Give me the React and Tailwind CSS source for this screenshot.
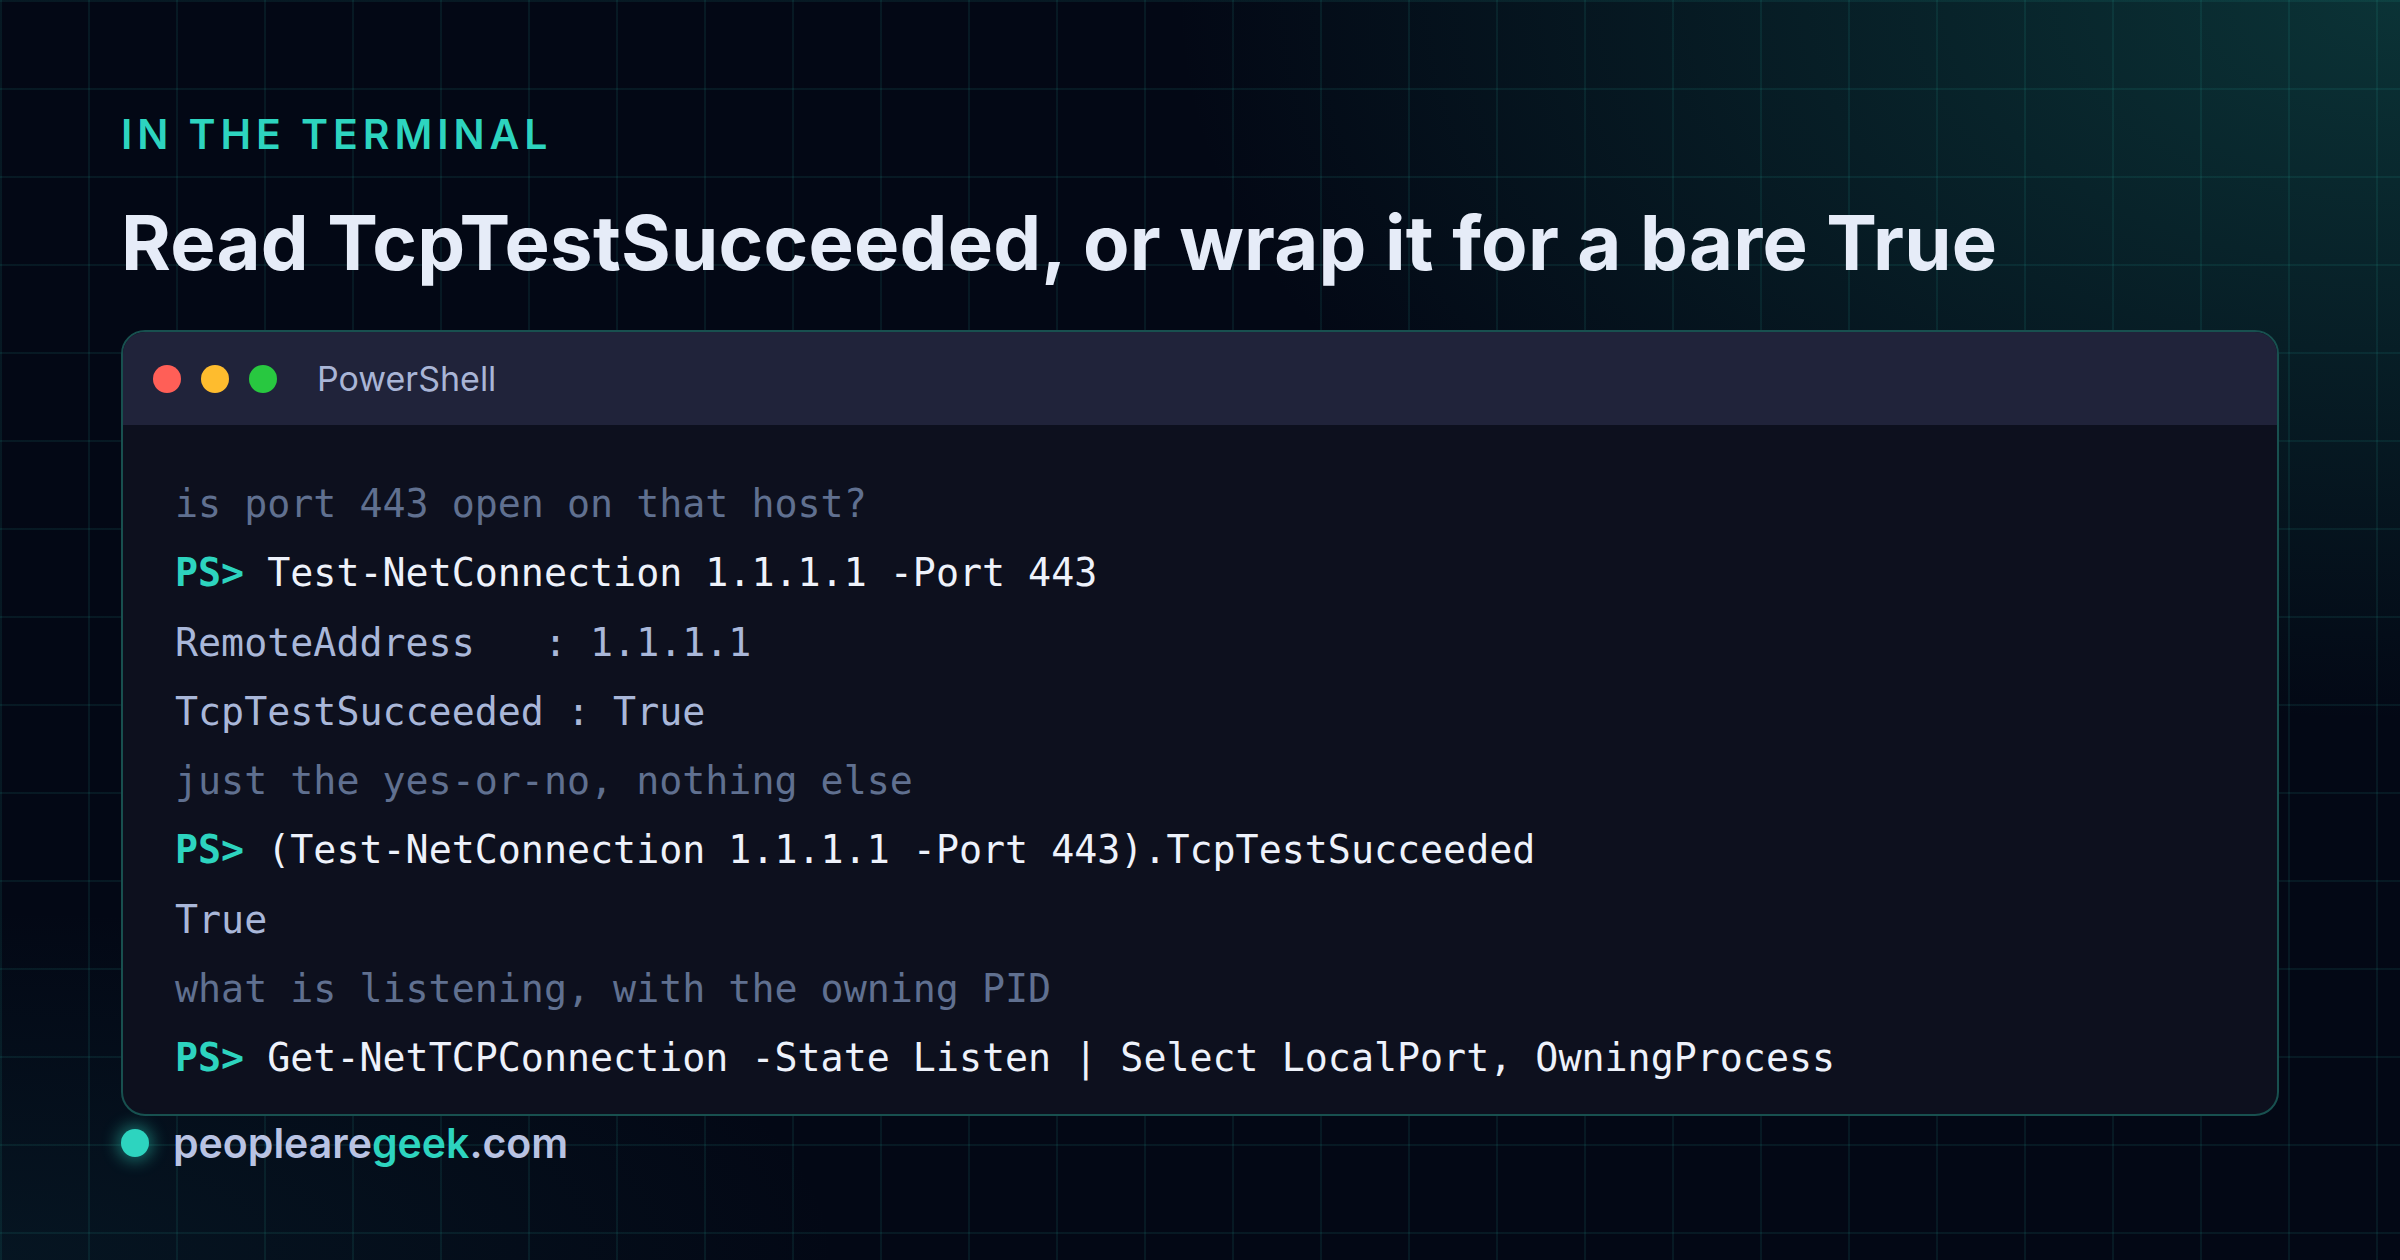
import React from 'react'

const lines = [
  { kind: 'comment', text: 'is port 443 open on that host?' },
  { kind: 'cmd', text: 'Test-NetConnection 1.1.1.1 -Port 443' },
  { kind: 'out', text: 'RemoteAddress   : 1.1.1.1' },
  { kind: 'out', text: 'TcpTestSucceeded : True' },
  { kind: 'comment', text: 'just the yes-or-no, nothing else' },
  { kind: 'cmd', text: '(Test-NetConnection 1.1.1.1 -Port 443).TcpTestSucceeded' },
  { kind: 'out', text: 'True' },
  { kind: 'comment', text: 'what is listening, with the owning PID' },
  { kind: 'cmd', text: 'Get-NetTCPConnection -State Listen | Select LocalPort, OwningProcess' },
]

function CodeLine({ line }) {
  if (line.kind === 'cmd') {
    return (
      <div className="whitespace-pre">
        <span className="font-bold text-[#2dd4bf]">PS&gt;</span>
        <span className="text-[#eef2fb]"> {line.text}</span>
      </div>
    )
  }
  if (line.kind === 'out') {
    return <div className="whitespace-pre text-[#a9b7d9]">{line.text}</div>
  }
  return <div className="whitespace-pre text-[#607090]">{line.text}</div>
}

export default function App() {
  return (
    <div className="relative w-[2400px] h-[1260px] overflow-hidden bg-[#030815] font-['Inter',sans-serif]">
      {/* glow + grid background */}
      <div className="absolute inset-0 bg-[radial-gradient(ellipse_1700px_1000px_at_100%_0%,rgba(22,110,100,0.42),rgba(3,8,21,0)_72%)]" />
      <div className="absolute inset-0 bg-[radial-gradient(ellipse_1200px_500px_at_0%_100%,rgba(20,90,100,0.16),rgba(3,8,21,0)_70%)]" />
      <div className="absolute inset-0 bg-[linear-gradient(to_right,rgba(45,212,191,0.085)_2px,transparent_2px),linear-gradient(to_bottom,rgba(45,212,191,0.085)_2px,transparent_2px)] bg-[size:88px_88px]" />

      <div className="relative flex flex-col pl-[121px] pr-[121px] pt-[114px]">
        <div className="text-[41px] leading-none font-semibold tracking-[0.12em] text-[#2dd4bf]">
          IN THE TERMINAL
        </div>
        <h1 className="mt-[49px] text-[76px] leading-none font-bold tracking-[0.25px] text-[#e6ecf8]">
          Read TcpTestSucceeded, or wrap it for a bare True
        </h1>

        <div className="mt-[50px] rounded-[24px] border-2 border-[#18504f] bg-[#0d101e] overflow-hidden">
          <div className="h-[93px] flex items-center pl-[30px] bg-[#20233a]">
            <div className="flex gap-[20px]">
              <span className="w-[28px] h-[28px] rounded-full bg-[#ff5f57]" />
              <span className="w-[28px] h-[28px] rounded-full bg-[#febc2e]" />
              <span className="w-[28px] h-[28px] rounded-full bg-[#28c840]" />
            </div>
            <span className="ml-[40px] text-[34px] text-[#a9b5d6]">PowerShell</span>
          </div>
          <div className="pl-[52px] pt-[44px] pb-[21px] font-['DejaVu_Sans_Mono',monospace] text-[38.3px] leading-[69.3px]">
            {lines.map((l, i) => (
              <CodeLine key={i} line={l} />
            ))}
          </div>
        </div>

        <div className="mt-[7px] flex items-center gap-[24px]">
          <span className="w-[28px] h-[28px] rounded-full bg-[#2dd4bf] shadow-[0_0_16px_4px_rgba(45,212,191,0.45)]" />
          <span className="text-[41px] leading-none font-semibold text-[#b9c3e3]">
            peopleare<span className="text-[#2dd4bf]">geek</span>.com
          </span>
        </div>
      </div>
    </div>
  )
}
